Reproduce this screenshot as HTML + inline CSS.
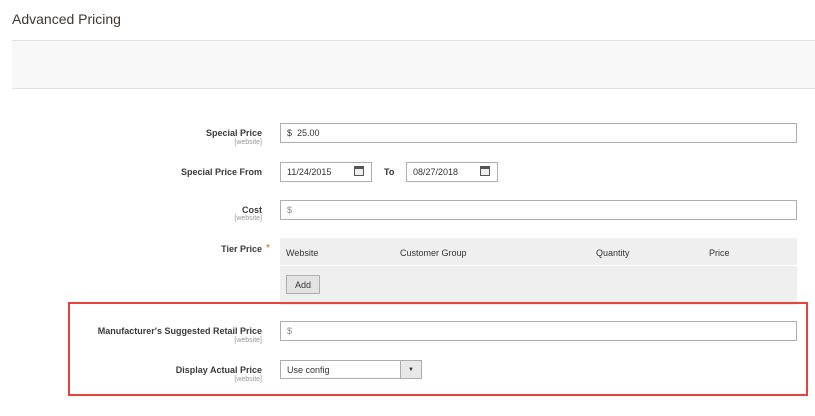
<!DOCTYPE html>
<html><head><style>
body{margin:0;width:815px;height:416px;background:#fff;font-family:"Liberation Sans",sans-serif;color:#333;position:relative;overflow:hidden}
.a{position:absolute}
.lbl{position:absolute;right:553px;text-align:right;font-size:9px;font-weight:bold;color:#3a3a3a;white-space:nowrap}
.sub{position:absolute;right:553px;font-size:7px;color:#999;text-align:right}
.inp{position:absolute;border:1px solid #adadad;background:#fff;box-sizing:border-box;font-size:9px;color:#333;padding-left:6px;display:flex;align-items:center}
.cal{position:absolute;width:10px;height:10px;border:1px solid #555;box-sizing:border-box;background:#eee}
.cal:before{content:"";position:absolute;left:0;right:0;top:0;height:2px;background:#555}
</style></head><body>
<div class="a" style="left:12px;top:11px;font-size:14px;color:#41362f">Advanced Pricing</div>
<div class="a" style="left:12px;top:40px;width:803px;height:47px;background:#f8f8f8;border-top:1px solid #e3e3e3;border-bottom:1px solid #e3e3e3"></div>

<div class="lbl" style="top:128px">Special Price</div>
<div class="sub" style="top:139px">[website]</div>
<div class="inp" style="left:280px;top:123px;width:517px;height:20px">$&nbsp;&nbsp;25.00</div>

<div class="lbl" style="top:167px">Special Price From</div>
<div class="inp" style="left:280px;top:162px;width:92px;height:20px">11/24/2015</div>
<div class="cal" style="left:354px;top:166px"></div>
<div class="a" style="left:384px;top:167px;font-size:9px;font-weight:bold">To</div>
<div class="inp" style="left:406px;top:162px;width:92px;height:20px">08/27/2018</div>
<div class="cal" style="left:480px;top:166px"></div>

<div class="lbl" style="top:205px">Cost</div>
<div class="sub" style="top:215px">[website]</div>
<div class="inp" style="left:280px;top:200px;width:517px;height:20px;color:#888">$</div>

<div class="lbl" style="top:244px;right:553px">Tier Price</div>
<div class="a" style="left:266px;top:243px;color:#eb5202;font-size:10px">*</div>
<div class="a" style="left:280px;top:238px;width:517px;height:67px;background:#efefef"></div>
<div class="a" style="left:280px;top:265px;width:517px;height:1px;background:#fff"></div>
<div class="a" style="left:286px;top:248px;font-size:9px">Website</div>
<div class="a" style="left:400px;top:248px;font-size:9px">Customer Group</div>
<div class="a" style="left:596px;top:248px;font-size:9px">Quantity</div>
<div class="a" style="left:709px;top:248px;font-size:9px">Price</div>
<div class="a" style="left:286px;top:275px;width:34px;height:19px;box-sizing:border-box;border:1px solid #adadad;background:#e3e3e3;font-size:9px;text-align:center;line-height:18px">Add</div>

<div class="a" style="left:68px;top:302px;width:740px;height:94px;box-sizing:border-box;border:2px solid #e8403b"></div>
<div class="lbl" style="top:326px">Manufacturer's Suggested Retail Price</div>
<div class="sub" style="top:337px">[website]</div>
<div class="inp" style="left:280px;top:321px;width:517px;height:20px;color:#888">$</div>

<div class="lbl" style="top:365px">Display Actual Price</div>
<div class="sub" style="top:376px">[website]</div>
<div class="inp" style="left:280px;top:360px;width:142px;height:19px">Use config</div>
<div class="a" style="left:400px;top:360px;width:22px;height:19px;box-sizing:border-box;border:1px solid #adadad;background:#e8e8e8;font-size:6px;text-align:center;line-height:18px">▼</div>
</body></html>
